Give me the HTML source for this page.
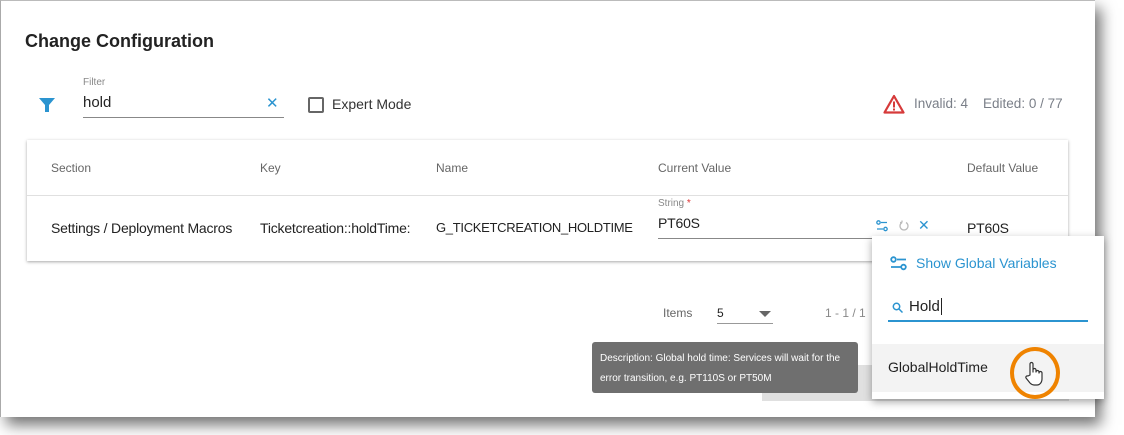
<!DOCTYPE html>
<html><head><style>
*{box-sizing:border-box;margin:0;padding:0}
body{width:1124px;height:435px;background:#fff;position:relative;overflow:hidden;font-family:"Liberation Sans",Arial,sans-serif;color:#222}
.a{position:absolute;white-space:nowrap}
#dlg{position:absolute;left:0;top:0;width:1095px;height:417px;background:#fff;border-left:1px solid #aaa;border-top:1px solid #bbb;box-shadow:6px 8px 14px rgba(0,0,0,.55)}
.h{font-size:12px;color:#666}
.c{font-size:14px;color:#222;letter-spacing:-0.2px}
</style></head><body>
<div id="dlg"></div>
<div class="a" style="left:25px;top:31px;font-size:18px;font-weight:bold;color:#222">Change Configuration</div>
<svg class="a" style="left:38px;top:96px" width="18" height="18" viewBox="0 0 18 18"><path d="M1 2h16l-6 7v7h-4V9z" fill="#2b94d0"/></svg>
<div class="a" style="left:83px;top:77px;font-size:10px;color:#888">Filter</div>
<div class="a" style="left:83px;top:94px;font-size:15px;color:#222">hold</div>
<div class="a" style="left:266px;top:94px;font-size:15px;color:#2b94d0">✕</div>
<div class="a" style="left:83px;top:117px;width:201px;height:1px;background:#888"></div>
<div class="a" style="left:308px;top:97px;width:16px;height:16px;border:2px solid #666;border-radius:2px"></div>
<div class="a" style="left:332px;top:96px;font-size:14px;color:#333">Expert Mode</div>
<svg class="a" style="left:883px;top:94px" width="22" height="20" viewBox="0 0 22 20"><path d="M11 2L20.5 18.5H1.5Z" fill="none" stroke="#d63a3a" stroke-width="2.2" stroke-linejoin="round"/><rect x="10" y="7.5" width="2" height="6" fill="#d63a3a"/><rect x="10" y="14.5" width="2" height="2" fill="#d63a3a"/></svg>
<div class="a" style="left:914px;top:96px;font-size:13.5px;color:#7a7f88">Invalid: 4&nbsp;&nbsp;&nbsp;&nbsp;Edited: 0 / 77</div>
<div class="a" style="left:27px;top:140px;width:1041px;height:121px;background:#fff;box-shadow:0 1px 3px rgba(0,0,0,.35)"></div>
<div class="a" style="left:27px;top:195px;width:1041px;height:1px;background:#e0e0e0"></div>
<div class="a h" style="left:51px;top:161px">Section</div>
<div class="a h" style="left:260px;top:161px">Key</div>
<div class="a h" style="left:436px;top:161px">Name</div>
<div class="a h" style="left:658px;top:161px">Current Value</div>
<div class="a h" style="left:967px;top:161px">Default Value</div>
<div class="a c" style="left:51px;top:220px">Settings / Deployment Macros</div>
<div class="a c" style="left:260px;top:220px">Ticketcreation::holdTime:</div>
<div class="a c" style="left:436px;top:220px;font-size:13px;letter-spacing:-0.3px">G_TICKETCREATION_HOLDTIME</div>
<div class="a" style="left:658px;top:198px;font-size:10px;color:#888">String <span style="color:#d33">*</span></div>
<div class="a c" style="left:658px;top:215px">PT60S</div>
<div class="a" style="left:658px;top:238px;width:230px;height:1px;background:#888"></div>
<svg class="a" style="left:876px;top:220px" width="12" height="12" viewBox="0 0 12 12" fill="none" stroke="#2b94d0" stroke-width="1.3"><circle cx="2.5" cy="2.5" r="1.7"/><path d="M5 2.5h6M1 9h6"/><circle cx="9.5" cy="9" r="1.7"/></svg>
<svg class="a" style="left:898px;top:220px" width="12" height="12" viewBox="0 0 12 12" fill="none" stroke="#bbb" stroke-width="1.3"><path d="M4 2.5A4 4 0 1 0 8 2.5M4 2.5V0.5M4 2.5H2"/></svg>
<div class="a" style="left:918px;top:217px;font-size:14px;color:#2b94d0">✕</div>
<div class="a c" style="left:967px;top:220px">PT60S</div>
<div class="a" style="left:663px;top:306px;font-size:12px;color:#666">Items</div>
<div class="a" style="left:717px;top:306px;font-size:12px;color:#222">5</div>
<div class="a" style="left:759px;top:311px;width:0;height:0;border-left:6px solid transparent;border-right:6px solid transparent;border-top:6px solid #666"></div>
<div class="a" style="left:717px;top:323px;width:56px;height:1px;background:#999"></div>
<div class="a" style="left:825px;top:306px;font-size:12px;color:#888">1 - 1 / 1</div>
<div class="a" style="left:762px;top:365px;width:307px;height:36px;background:#e0e0e0"></div>
<div class="a" style="left:823px;top:373px;font-size:14px;color:#bbb">Save</div>
<div class="a" style="left:592px;top:342px;width:266px;height:51px;background:#6f6f6f;border-radius:3px;color:#fff;font-size:10px;line-height:20px;padding:7px 8px">Description: Global hold time: Services will wait for the<br>error transition, e.g. PT110S or PT50M</div>
<div class="a" style="left:872px;top:236px;width:232px;height:163px;background:#fff;box-shadow:0 3px 8px rgba(0,0,0,.35)"></div>
<svg class="a" style="left:890px;top:256px" width="17" height="15" viewBox="0 0 17 15" fill="none" stroke="#2b94d0" stroke-width="1.8"><circle cx="3.5" cy="3.5" r="2.3"/><path d="M7 3.5h9M1 11h10"/><circle cx="13.5" cy="11" r="2.3"/></svg>
<div class="a" style="left:916px;top:255px;font-size:14px;color:#2b94d0">Show Global Variables</div>
<svg class="a" style="left:892px;top:302px" width="11" height="11" viewBox="0 0 11 11" fill="none" stroke="#2b94d0" stroke-width="1.5"><circle cx="4.5" cy="4.5" r="3.2"/><path d="M7 7l3.5 3.5"/></svg>
<div class="a" style="left:909px;top:298px;font-size:15px;color:#222">Hold<span style="border-left:1px solid #222;margin-left:1px"></span></div>
<div class="a" style="left:888px;top:320px;width:200px;height:2px;background:#2b94d0"></div>
<div class="a" style="left:872px;top:344px;width:232px;height:48px;background:#f3f3f3"></div>
<div class="a" style="left:888px;top:359px;font-size:14px;color:#222">GlobalHoldTime</div>
<div class="a" style="left:1010px;top:347px;width:50px;height:52px;border:4px solid #ef8300;border-radius:50%"></div>
<svg class="a" style="left:1023px;top:361px" width="22" height="26" viewBox="0 0 22 26" fill="#fff" stroke="#333" stroke-width="1.2" stroke-linejoin="round"><path d="M7 14V3a1.5 1.5 0 0 1 3 0v8V9a1.5 1.5 0 0 1 3 0v2a1.5 1.5 0 0 1 3 0v1a1.5 1.5 0 0 1 3 0v6c0 3-2 6-5 6h-3c-2 0-3-1-4-2l-4-5a1.5 1.5 0 0 1 2-2z"/></svg>
</body></html>
